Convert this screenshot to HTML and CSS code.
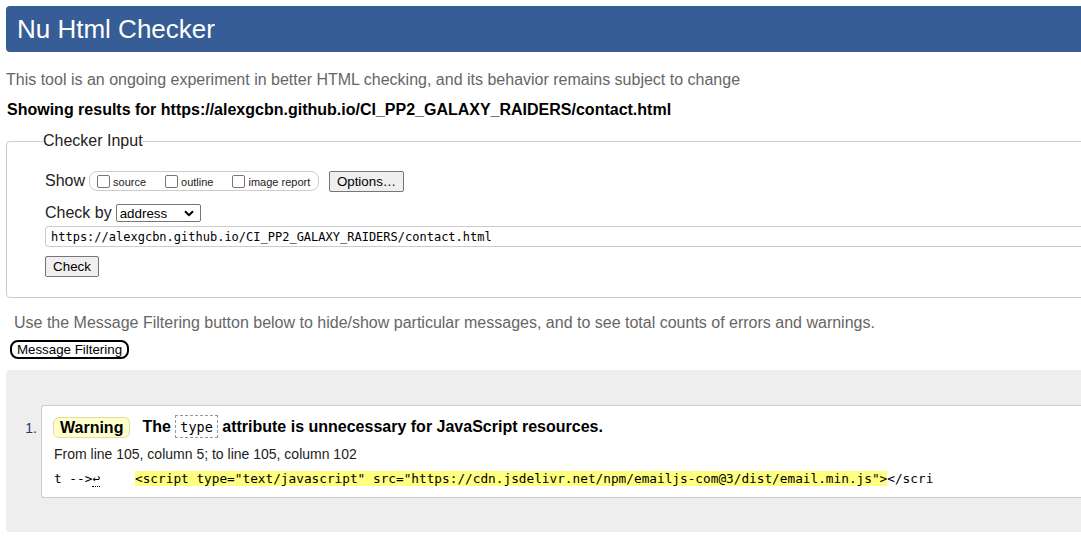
FILE: index.html
```html
<!DOCTYPE html>
<html>
<head>
<meta charset="utf-8">
<title>Nu Html Checker</title>
<link rel="stylesheet" href="styles.css">
</head>
<body>
<div class="page">
  <h1 class="masthead">Nu Html Checker</h1>
  <p class="intro">This tool is an ongoing experiment in better HTML checking, and its behavior remains subject to change</p>
  <p class="showing">Showing results for https://alexgcbn.github.io/CI_PP2_GALAXY_RAIDERS/contact.html</p>

  <fieldset class="input-box">
    <legend class="legend">Checker Input</legend>
    <div class="row show-row">
      <span class="label">Show</span>
      <span class="opts">
        <label class="opt"><span class="cb"></span>source</label>
        <label class="opt"><span class="cb"></span>outline</label>
        <label class="opt"><span class="cb"></span>image report</label>
      </span>
      <button class="btn options">Options…</button>
    </div>
    <div class="row checkby-row">
      <span class="label">Check by</span>
      <span class="select">address<svg class="chev" width="10" height="7" viewBox="0 0 10 7"><path d="M1 1.2 L5 5.2 L9 1.2" fill="none" stroke="#000" stroke-width="2"/></svg></span>
    </div>
    <div class="url">https://alexgcbn.github.io/CI_PP2_GALAXY_RAIDERS/contact.html</div>
    <button class="btn check">Check</button>
  </fieldset>

  <p class="filter-hint">Use the Message Filtering button below to hide/show particular messages, and to see total counts of errors and warnings.</p>
  <button class="filter-btn">Message Filtering</button>

  <div class="results">
    <div class="msg-row">
      <span class="num">1.</span>
      <div class="card">
        <p class="msg-title"><span class="badge">Warning</span><span class="msg-text">The <code class="attr">type</code> attribute is unnecessary for JavaScript resources.</span></p>
        <p class="location">From line 105, column 5; to line 105, column 102</p>
        <p class="extract"><span class="pre">t --&gt;<span class="lf">↩</span>    </span><mark class="hl">&lt;script type="text/javascript" src="https://cdn.jsdelivr.net/npm/emailjs-com@3/dist/email.min.js"&gt;</mark>&lt;/scri</p>
      </div>
    </div>
  </div>
</div>
</body>
</html>
```

FILE: styles.css
```css
html, body {
  margin: 0;
  padding: 0;
  overflow: hidden;
  background: #fff;
}
body {
  font-family: Arial, "Liberation Sans", sans-serif;
  font-size: 16px;
  color: #000;
}
.page {
  width: 1160px;
  padding: 6px 0 0 6px;
}
.masthead {
  margin: 0;
  height: 46px;
  background: #365d95;
  color: #fff;
  font-weight: normal;
  font-size: 26px;
  line-height: 46px;
  padding-left: 11px;
  border-radius: 4px;
}
.intro {
  margin: 19px 0 0 0;
  color: #666;
  font-size: 16px;
  line-height: 18px;
}
.showing {
  margin: 12px 0 0 1px;
  font-weight: bold;
  font-size: 16px;
  line-height: 18px;
}
.input-box {
  margin: 13px 0 0 0;
  border: 1px solid #ccc;
  border-radius: 4px;
  padding: 20px 0 20px 38px;
}
.legend {
  padding: 0;
  margin-left: -2px;
  font-size: 16px;
  line-height: 18px;
  color: #222;
}
.row {
  display: flex;
  align-items: center;
}
.label {
  font-size: 16px;
  color: #222;
}
.show-row {
  height: 22px;
}
.opts {
  display: flex;
  align-items: center;
  margin-left: 4px;
  height: 18px;
  border: 1px solid #ccc;
  border-radius: 8px;
  padding: 0 4px 0 7px;
  width: 217px;
  box-sizing: content-box;
  gap: 0;
}
.opt {
  display: flex;
  align-items: center;
  font-size: 11px;
  color: #222;
  margin-right: 19px;
  padding-top: 2px;
}
.opt:last-child { margin-right: 0; }
.cb {
  display: inline-block;
  width: 11px;
  height: 11px;
  border: 1px solid #767676;
  border-radius: 2px;
  margin: -2px 3px 0 0;
  background: #fff;
}
.btn {
  font-family: Arial, "Liberation Sans", sans-serif;
  font-size: 13.33px;
  background: #efefef;
  border: 1px solid #767676;
  border-radius: 2px;
  color: #000;
  padding: 1px 6px;
  height: 21px;
}
.options {
  margin-left: 10px;
  width: 75px;
}
.checkby-row {
  margin-top: 11px;
  height: 20px;
}
.select {
  margin-left: 4px;
  display: inline-flex;
  align-items: center;
  justify-content: space-between;
  width: 85px;
  height: 18px;
  box-sizing: border-box;
  border: 1px solid #767676;
  border-radius: 2px;
  font-size: 13.33px;
  padding: 0 6px 0 3px;
}
.url {
  margin-top: 3px;
  height: 21px;
  box-sizing: border-box;
  border: 1px solid #ccc;
  border-right: none;
  border-radius: 4px 0 0 4px;
  font-family: "DejaVu Sans Mono", "Liberation Mono", monospace;
  font-size: 12px;
  line-height: 20px;
  padding-left: 5px;
  color: #000;
}
.check {
  margin-top: 9px;
  width: 54px;
  display: block;
}
.filter-hint {
  margin: 16px 0 0 8px;
  color: #666;
  font-size: 16px;
  line-height: 18px;
}
.filter-btn {
  display: block;
  margin: 8px 0 0 4px;
  font-family: Arial, "Liberation Sans", sans-serif;
  font-size: 13.33px;
  width: 119px;
  height: 19px;
  padding: 0;
  background: #fff;
  border: 2px solid #000;
  border-radius: 8px;
  color: #000;
  line-height: 15px;
}
.results {
  margin-top: 11px;
  background: #eee;
  border-radius: 4px;
  height: 162px;
  box-sizing: border-box;
  padding-top: 35px;
}
.msg-row {
  display: flex;
  align-items: flex-start;
}
.num {
  width: 31px;
  text-align: right;
  padding-right: 4px;
  font-size: 14px;
  color: #1f3a70;
  margin-top: 15px;
}
.card {
  flex: 1;
  background: #fff;
  border: 1px solid #ccc;
  border-right: none;
  border-radius: 3px 0 0 3px;
  padding: 8px 0 9px 11px;
  height: 93px;
  box-sizing: border-box;
}
.msg-title {
  margin: 0;
  display: flex;
  align-items: center;
  height: 26px;
  font-weight: bold;
  font-size: 16px;
}
.badge {
  display: inline-block;
  background: #ffffcc;
  border: 1px solid #e0dca0;
  border-radius: 6px;
  padding: 0 6px;
  height: 21px;
  line-height: 20px;
  box-sizing: border-box;
  margin-right: 12px;
}
.attr {
  font-family: "DejaVu Sans Mono", "Liberation Mono", monospace;
  font-weight: normal;
  font-size: 13.5px;
  border: 1px dashed #999;
  padding: 3px 4px 2px;
  margin: 0 0;
}
.location {
  margin: 6px 0 0 1px;
  font-size: 14px;
  line-height: 16px;
  color: #222;
}
.extract {
  margin: 9px 0 0 1px;
  font-family: "DejaVu Sans Mono", "Liberation Mono", monospace;
  font-size: 12.75px;
  line-height: 16px;
  white-space: pre;
  color: #000;
}
.pre {
  display: inline-block;
  width: 81px;
}
.lf {
  border-bottom: 1px dotted #000;
}
.hl {
  background: #ffff80;
  color: #000;
}
```
